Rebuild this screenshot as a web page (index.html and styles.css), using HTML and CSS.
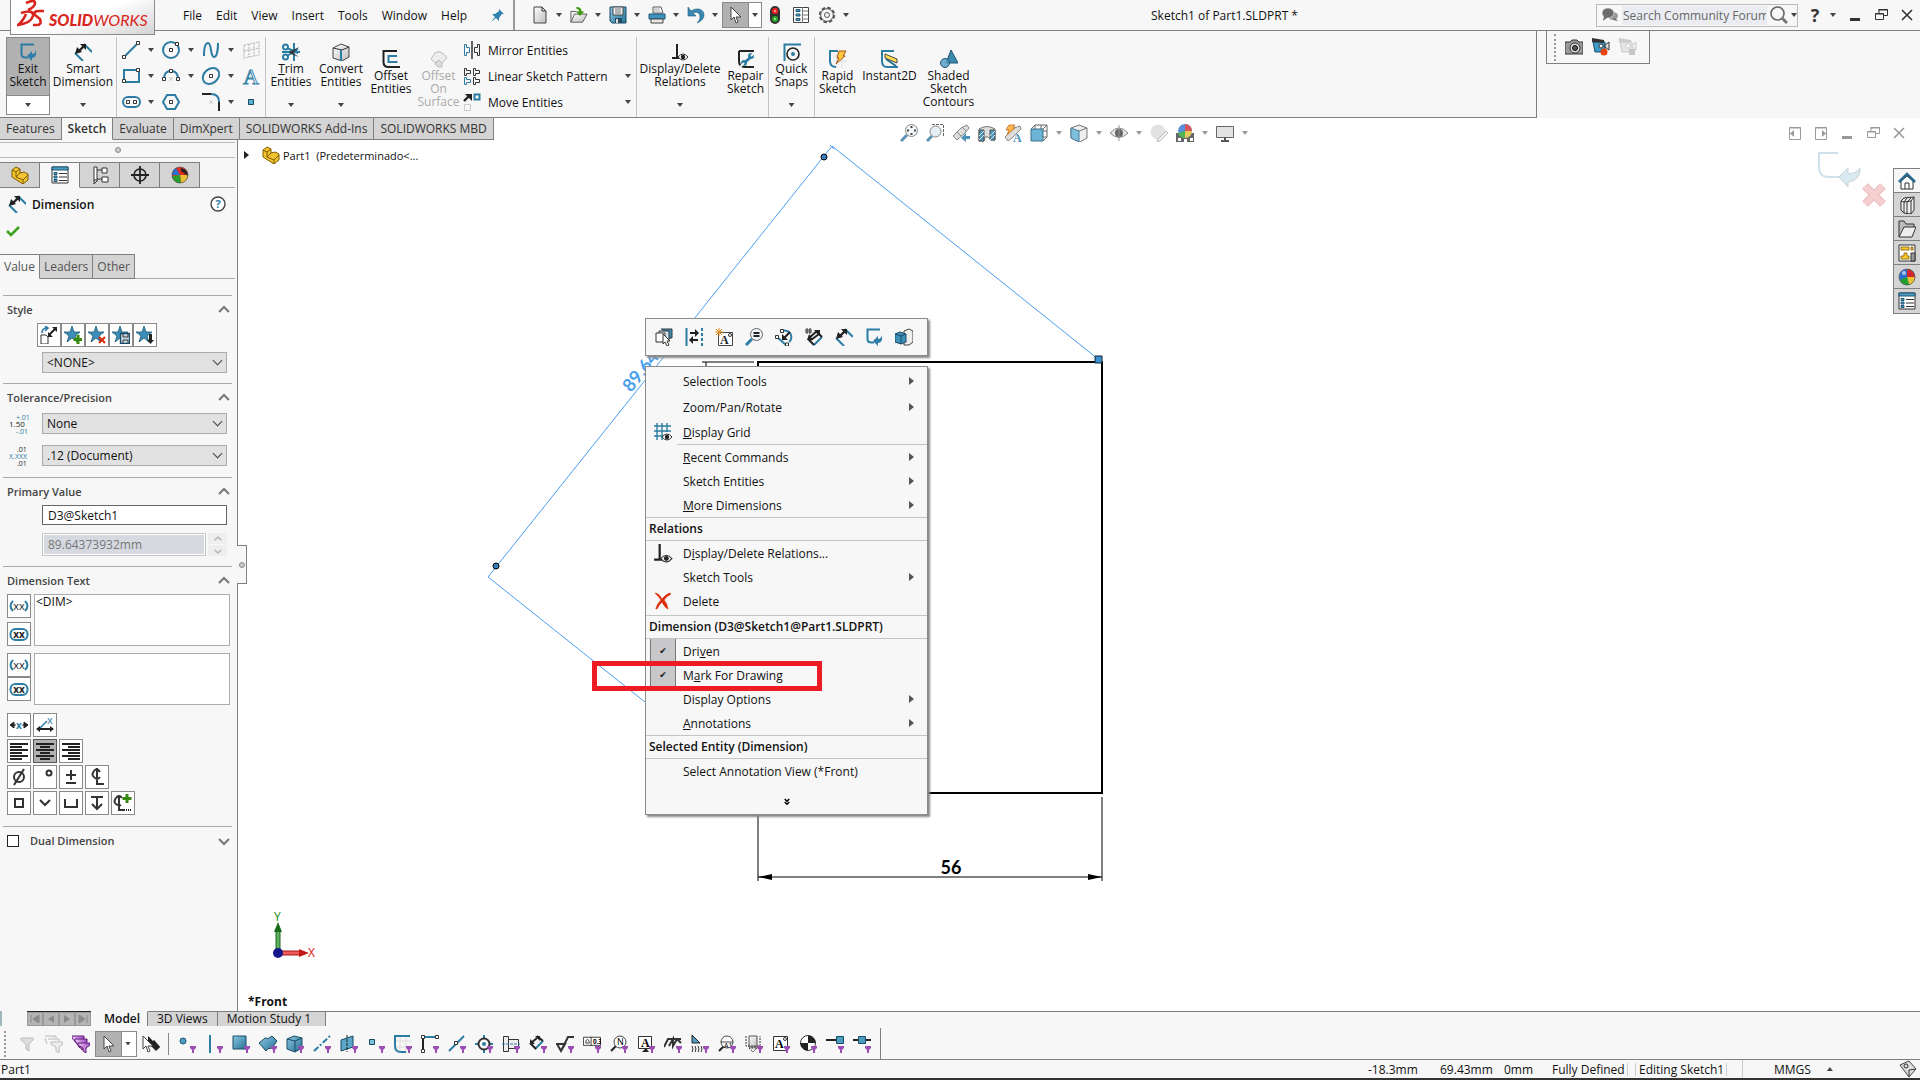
FILE: index.html
```html
<!DOCTYPE html>
<html lang="en">
<head>
    <meta charset="UTF-8">
    <meta name="viewport" content="width=device-width, initial-scale=1.0">
    <title>Sketch1 of Part1.SLDPRT</title>
    <link rel="stylesheet" href="styles.css">
</head>
<body>
    <!-- gradients stay rendered, symbols do not need to -->
    <svg class="gradients" aria-hidden="true">
        <defs>
            <linearGradient id="gb" x1="0" y1="0" x2="1" y2="1"><stop offset="0" stop-color="#8cc8e2"/><stop offset="1" stop-color="#256f94"/></linearGradient>
            <linearGradient id="gg" x1="0" y1="0" x2="1" y2="1"><stop offset="0" stop-color="#ffffff"/><stop offset="1" stop-color="#bdbdbd"/></linearGradient>
            <linearGradient id="gp" x1="0" y1="0" x2="1" y2="0"><stop offset="0" stop-color="#f0c8f8"/><stop offset="1" stop-color="#a04cc0"/></linearGradient>
        </defs>
    </svg>
    <!-- icon sprite -->
    <svg class="sprite" aria-hidden="true">
        <symbol id="pin" viewBox="0 0 18 18"><path d="M10 3l5 5-2 0-3 4 0 3-3-3-5 4 4-5-3-3 3 0 4-3z" fill="#2f82ad"/></symbol>
        <symbol id="new" viewBox="0 0 18 18"><path d="M3 1h8l4 4v12H3z" fill="url(#gg)" stroke="#444"/><path d="M11 1v4h4" class="sk"/></symbol>
        <symbol id="open" viewBox="0 0 20 18"><path d="M1 17V5h6l2 2h4v3" fill="#eee" stroke="#555"/><path d="M1 17l4-9h14l-5 9z" fill="url(#gg)" stroke="#555"/><path d="M7 0c4 0 6 2 6 5h3l-5 5-4-5h3c0-2-1-3-3-3z" fill="#3c9a10"/></symbol>
        <symbol id="save" viewBox="0 0 18 18"><path d="M1 1h16v16H3l-2-2z" fill="url(#gb)" stroke="#184b66"/><path d="M4 1h10v8H4z" fill="#f4f4f4" stroke="#444"/><path d="M6 3h6M6 5h6M6 7h6" stroke="#777"/><path d="M6 12h7v5H6z" fill="#244c60"/><path d="M7 13h2v4H7z" fill="#ddd"/></symbol>
        <symbol id="print" viewBox="0 0 18 18"><path d="M5 7V1h8l2 6z" fill="#fff" stroke="#555"/><path d="M6 3h6M6 5h6" stroke="#aaa"/><path d="M1 8h16v5H1z" fill="#3d93bd" stroke="#1d5675"/><path d="M3 13h12v4H3z" fill="#e8e8e8" stroke="#444"/></symbol>
        <symbol id="undo" viewBox="0 0 18 18"><path d="M1 1v9h8L6 7c4-2 7 0 7 4 0 2-1 4-3 6 5-2 7-5 7-8C17 3 10 1 4 5z" fill="#3a87b0" stroke="#1f5d80" stroke-width=".6"/></symbol>
        <symbol id="arrow" viewBox="0 0 18 18"><path d="M4 1v13l3-3 2 6 2-1-2-5h5z" fill="#fff" stroke="#444"/></symbol>
        <symbol id="arrows" viewBox="0 0 18 18"><path d="M6 1v8l8 6 3-2-7-8z" fill="#222"/><path d="M8 7l7 8M11 6l6 7" stroke="#222" stroke-width="3"/><path d="M1 1v13l3-3 2 6 2-1-2-5h5z" fill="#fff" stroke="#444"/></symbol>
        <symbol id="light" viewBox="0 0 18 18"><rect x="4" y="0" width="10" height="18" rx="5" fill="#333"/><circle cx="9" cy="5" r="3" fill="#e22"/><circle cx="9" cy="13" r="3" fill="#2a2"/><path d="M8 5h2M8 13h2" stroke="#fff"/></symbol>
        <symbol id="opts" viewBox="0 0 18 18"><path d="M1.500 1.500h15v15h-15z" fill="#fff" stroke="#444"/><path d="M10.500 1v16M11 5h5M11 9h5M11 13h5" stroke="#777"/><path d="M4 3.500h4v2H4zM4 8h4v2H4zM4 12.500h4v2H4z" fill="#5aa7ca" stroke="#1d5675"/></symbol>
        <symbol id="gear" viewBox="0 0 18 18"><circle cx="9" cy="9" r="7" fill="none" stroke="#555" stroke-width="2.400" stroke-dasharray="3.500 2"/><circle cx="9" cy="9" r="6.300" fill="#f7f7f7" stroke="#555"/><circle cx="9" cy="9" r="2.500" fill="none" stroke="#555"/></symbol>
        <symbol id="chat" viewBox="0 0 18 18"><ellipse cx="12" cy="10" rx="5" ry="4" fill="#999"/><ellipse cx="7" cy="7" rx="6" ry="5" fill="#6b6b6b" stroke="#f7f7f7" stroke-width=".6"/><path d="M3 10l-1 5 5-4zM14 12l3 3-5-1z" fill="#6b6b6b"/></symbol>
        <symbol id="find" viewBox="0 0 18 18"><circle cx="7.500" cy="7.500" r="6.500" fill="none" stroke="#666" stroke-width="1.600"/><path d="M12 12l5 5" stroke="#777" stroke-width="3"/></symbol>
        <symbol id="min" viewBox="0 0 18 18"><path d="M4 12h10v3H4z" fill="currentColor"/></symbol>
        <symbol id="restore" viewBox="0 0 18 18"><path d="M7 7V3.500h8.500v6H12M6 4h10" fill="none" stroke="currentColor"/><path d="M3.500 7.500h8v6h-8zM3 8h9" fill="none" stroke="currentColor"/></symbol>
        <symbol id="close" viewBox="0 0 18 18"><path d="M4 4l10 10M14 4L4 14" stroke="currentColor" stroke-width="1.600"/></symbol>
        <symbol id="dockl" viewBox="0 0 18 18"><path d="M3.500 3.500h11v12h-11zM3 4h12" fill="none" stroke="currentColor"/><path d="M8 6v7L4 9.500z" fill="currentColor"/></symbol>
        <symbol id="dockr" viewBox="0 0 18 18"><path d="M3.500 3.500h11v12h-11zM3 4h12" fill="none" stroke="currentColor"/><path d="M10 6v7l4-3.500z" fill="currentColor"/></symbol>

        <symbol id="exit" viewBox="0 0 18 18"><path d="M15 1.500H2.500V11q0 3.500 4 3.500H9" class="sb"/><path d="M8 13l5-5v3q3 0 4-4 1 8-4 8v3z" fill="#2f7ea8"/></symbol>
        <symbol id="dim" viewBox="0 0 18 18"><path d="M1 10l8 8M10 1l8 8" class="sb"/><path d="M4 9l6-6" stroke="#222" stroke-width="2.400"/><path d="M1 11l2-7 5 5zM6 1h6v6z" fill="#222"/></symbol>
        <symbol id="line" viewBox="0 0 20 20"><path d="M3 17L17 3" class="sb"/><path d="M1.500 15.500h3v3h-3zM15.500 1.500h3v3h-3z" class="hd"/></symbol>
        <symbol id="circle" viewBox="0 0 20 20"><circle cx="10" cy="10" r="8" class="sb"/><path d="M8.500 8.500h3v3h-3zM14.500 2.500h3v3h-3z" class="hd"/></symbol>
        <symbol id="spline" viewBox="0 0 20 20"><path d="M3 16C3 10 4 3 7 3c4 0 2 14 6 14 3 0 4-8 4-14" class="sb"/></symbol>
        <symbol id="plane" viewBox="0 0 20 20"><path d="M3 5l15-3v13L3 18zM3 11l15-3M8 4v13M13 3v13" fill="none" stroke="#c4c4c4" stroke-width="1.400" stroke-dasharray="2 1"/></symbol>
        <symbol id="rect" viewBox="0 0 20 20"><path d="M3 4h15v12H3z" class="sb"/><path d="M1.500 13.500h3v3h-3zM15.500 2.500h3v3h-3z" class="hd"/></symbol>
        <symbol id="arc" viewBox="0 0 20 20"><path d="M3 13Q3 5 10 5t7 8" class="sb"/><path d="M8 11l4 4M12 11l-4 4" stroke="#ccc"/><path d="M1.500 11.500h3v3h-3zM15.500 11.500h3v3h-3zM8.500 3.500h3v3h-3z" class="hd"/></symbol>
        <symbol id="ellipse" viewBox="0 0 20 20"><ellipse cx="10" cy="10" rx="9" ry="7" transform="rotate(-40 10 10)" class="sb"/><path d="M8.500 8.500h3v3h-3z" class="hd"/></symbol>
        <symbol id="stext" viewBox="0 0 20 20"><text x="2" y="18" font-size="22" font-family="Liberation Serif" fill="#fff" stroke="#3a85ab">A</text></symbol>
        <symbol id="slot" viewBox="0 0 20 20"><rect x="2" y="5" width="17" height="10" rx="5" class="sb"/><path d="M5.500 8.500h3v3h-3zM12.500 8.500h3v3h-3z" class="hd"/></symbol>
        <symbol id="poly" viewBox="0 0 20 20"><path d="M6 3h8l4 7-4 7H6l-4-7z" class="sb"/><path d="M8.500 8.500h3v3h-3z" class="hd"/></symbol>
        <symbol id="fillet" viewBox="0 0 20 20"><path d="M1 2h9" stroke="#222" stroke-width="2"/><path d="M10 2q8 0 8 8" class="sb"/><path d="M18 10v9" stroke="#222" stroke-width="2"/><path d="M8 8l4 4M12 8l-4 4" stroke="#ccc"/></symbol>
        <symbol id="point" viewBox="0 0 20 20"><path d="M7.500 7.500h5v5h-5z" fill="#5fb0d4" stroke="#184b66"/></symbol>
        <symbol id="trim" viewBox="0 0 18 18"><path d="M5 5l11 5M5 13L16 6M12 0v18M0 9h18" class="sb"/><path d="M7 9l10-5-6 6 6 4-8-3z" fill="#333"/><circle cx="3.500" cy="4" r="2.500" class="sb"/><circle cx="3.500" cy="14" r="2.500" class="sb"/></symbol>
        <symbol id="convert" viewBox="0 0 18 18"><path d="M1 5l8-4 8 3v10l-7 4-9-3z" fill="url(#gg)" stroke="#444"/><path d="M1 5l9 2 7-3" class="sk"/><path d="M9 7v11" class="sb"/></symbol>
        <symbol id="offset" viewBox="0 0 18 18"><path d="M15 1H1.500v11q0 5 5 5H18" fill="none" stroke="#222" stroke-width="2"/><path d="M15 6H6.500v6h9" class="sb"/></symbol>
        <symbol id="offsurf" viewBox="0 0 18 18"><path d="M1 9l4-6q6-4 12 5l-5 5-3-3-4 3z" fill="#eee" stroke="#bbb"/><path d="M5 14l4-4 3 3v4H8z" fill="#ddd" stroke="#bbb"/></symbol>
        <symbol id="mirror" viewBox="0 0 18 18"><path d="M9 0v18" stroke="#222" stroke-width="1.400"/><path d="M1.500 3.500h2v3h3v5h-3v3h-2z" fill="none" stroke="#2c7da3"/><path d="M16.500 3.500h-2v3h-3v5h3v3h2z" class="sk"/></symbol>
        <symbol id="pattern" viewBox="0 0 18 18"><path d="M1.500 1.500h2v2h4v3h-4v2h-2zM10.500 1.500h2v2h4v3h-4v2h-2zM10.500 10.500h2v2h4v3h-4v2h-2z" class="sk"/><path d="M1.500 10.500h2v2h4v3h-4v2h-2z" fill="none" stroke="#2c7da3"/></symbol>
        <symbol id="move" viewBox="0 0 18 18"><path d="M11.500 1.500h5v5h-5z" class="sb"/><path d="M1 8l5-5" stroke="#222" stroke-width="2.400"/><path d="M2 1h7v7z" fill="#222"/><path d="M1.500 11.500h6v6h-6z" fill="none" stroke="#bbb" stroke-dasharray="2 1"/></symbol>
        <symbol id="rel" viewBox="0 0 18 18"><path d="M6 1v13M1 15h8" stroke="#222" stroke-width="2"/><path d="M7 14q5-6 10 0-5 6-10 0z" fill="#fff" stroke="#333"/><circle cx="12" cy="14" r="2.200" fill="#222"/></symbol>
        <symbol id="repair" viewBox="0 0 18 18"><path d="M17 1H2M2 1v10q0 6 6 6h9" fill="none" stroke="#222" stroke-width="2"/><path d="M6 14l9-8" stroke="#2c7da3" stroke-width="3"/><circle cx="14" cy="6" r="3" fill="#2c7da3"/><circle cx="7" cy="13" r="3" fill="#2c7da3"/><path d="M14 6l4-4M7 13l-4 4" stroke="#f7f7f7" stroke-width="2"/></symbol>
        <symbol id="snaps" viewBox="0 0 18 18"><path d="M1.500 18V1.500H18" class="sb"/><circle cx="10" cy="11" r="6" fill="none" stroke="#222" stroke-width="1.600"/><circle cx="10" cy="11" r="2" fill="#2c7da3"/></symbol>
        <symbol id="rapid" viewBox="0 0 18 18"><path d="M4 6h14M4 11h14M8 3v15M13 3v15" stroke="#ddd"/><path d="M9 1H1v10q0 6 6 6" class="sb"/><path d="M10 1h7l-3 5h2l-9 8 3-6H8z" fill="#ffc83d" stroke="#a4541a"/></symbol>
        <symbol id="instant" viewBox="0 0 18 18"><path d="M13 1H1v10q0 6 5 6h11" class="sb"/><path d="M4 4l12 5v4L4 8z" fill="#ffdb4d" stroke="#444"/><path d="M5 9l10 7" stroke="#256f94" stroke-width="2"/></symbol>
        <symbol id="shaded" viewBox="0 0 18 18"><path d="M11 0l7 13H6z" fill="#3d89ae" stroke="#1d5675"/><circle cx="5" cy="13" r="4.500" fill="#4f9cc1" fill-opacity=".8" stroke="#1d5675"/></symbol>
        <symbol id="camera" viewBox="0 0 18 18"><path d="M0 4h5l2-2h5l2 2h4v12H0z" fill="#999" stroke="#333"/><circle cx="10" cy="10" r="5" fill="#ddd" stroke="#333"/><circle cx="10" cy="10" r="2.500" fill="#555" stroke="#111"/></symbol>
        <symbol id="record" viewBox="0 0 18 18"><path d="M1 4h12v10H3z" fill="#3c9bc6" stroke="#1a4d66"/><path d="M0 0v4l12 1V2z" fill="#333"/><path d="M13 7l4-3v8l-4-3z" fill="#ddd" stroke="#333"/><circle cx="9" cy="8" r="2" fill="#fff" stroke="#333"/><circle cx="12" cy="14" r="3.500" fill="#e8430c"/></symbol>
        <symbol id="stoprec" viewBox="0 0 18 18"><path d="M1 4h12v10H3z" fill="#e4e4e4" stroke="#ccc"/><path d="M0 0v4l12 1V2z" fill="#ccc"/><path d="M13 7l4-3v8l-4-3z" fill="#eee" stroke="#ccc"/><circle cx="9" cy="8" r="2" fill="#fff" stroke="#ccc"/><path d="M10 11h6v6h-6z" fill="#c6c6c6"/></symbol>

        <symbol id="zfit" viewBox="0 0 18 18"><path d="M1 17l6-6" stroke="#5c95b3" stroke-width="3"/><circle cx="11.500" cy="6.500" r="6" fill="#f2f6f8" stroke="#888"/><path d="M11.500 2v2M11.500 9v2M7 6.500h2M14 6.500h2" stroke="#444" stroke-width="2"/></symbol>
        <symbol id="zarea" viewBox="0 0 18 18"><path d="M6 .5h11.500v12" fill="none" stroke="#666" stroke-dasharray="3 1"/><path d="M1 17l5-5" stroke="#5c95b3" stroke-width="3"/><circle cx="9.500" cy="7.500" r="5.500" fill="#e3eff5" stroke="#888"/></symbol>
        <symbol id="zprev" viewBox="0 0 18 18"><path d="M1 12l8-8 6-3 2 3-4 5-8 7z" fill="#ddd" stroke="#888"/><path d="M10 3l4 4M5 8l4 4" stroke="#888"/><path d="M18 12h-4V9l-5 5 5 4v-3h4z" fill="#4a92b8"/></symbol>
        <symbol id="section" viewBox="0 0 18 18"><path d="M1 5q8-5 16 0v11h-4l-3-3H7l-1 4H1z" fill="#ddd" stroke="#777"/><path d="M1 6h5v11H1zM12 6h5v10h-5z" fill="#4a92b8" stroke="#555"/><path d="M1 12l5-5M1 16l5-5M12 12l5-5M12 16l5-5" stroke="#d5e8f1"/></symbol>
        <symbol id="dynview" viewBox="0 0 18 18"><path d="M1 13l9-9 6-2 1 3-9 9-4 3z" fill="#ddd" stroke="#888"/><path d="M5 1h6L9 4h2l-8 7 2-5H2z" fill="#ffb84d" stroke="#b05b1a" stroke-width=".7"/><text x="9" y="18" font-size="12" font-family="Liberation Serif" font-weight="bold" fill="#4a92b8">A</text></symbol>
        <symbol id="orient" viewBox="0 0 18 18"><path d="M5 1h12v12H5zM5 1l-4 4M17 1l-4 4M17 13l-4 4M5 7h12M11 1v12" fill="none" stroke="#666"/><path d="M1 5h12v12H1z" fill="#6db3d3" stroke="#3b6f8b"/></symbol>
        <symbol id="style" viewBox="0 0 18 18"><path d="M1 4l8-3 8 3v10l-7 4-9-4z" fill="#eee" stroke="#777"/><path d="M1 4l8 3v11l-8-4z" fill="#7fbfdb" stroke="#4d7f98"/><path d="M9 7l8-3" stroke="#777"/></symbol>
        <symbol id="eye" viewBox="0 0 18 18"><path d="M0 9q9-10 18 0-9 9-18 0z" fill="#e6e6e6" stroke="#888"/><circle cx="9" cy="9" r="4" fill="#666"/><path d="M9 1v16" stroke="#999"/></symbol>
        <symbol id="editapp" viewBox="0 0 18 18"><circle cx="8" cy="8" r="7.500" fill="#e2e2e2"/><path d="M8 15l8-8 2 2-8 8-3 1z" fill="#eee" stroke="#bbb"/></symbol>
        <symbol id="ball" viewBox="0 0 18 18"><circle cx="9" cy="9" r="8" fill="#2b6fd1"/><path d="M9 9V1a8 8 0 0 1 8 8z" fill="#d3272b"/><path d="M9 9h8a8 8 0 0 1-6 8z" fill="#e9c136"/><path d="M9 9l2 8a8 8 0 0 1-9-5z" fill="#26a02c"/><circle cx="9" cy="9" r="8" fill="none" stroke="#555" stroke-width=".7"/><circle cx="6" cy="5" r="2" fill="#fff" fill-opacity=".6"/></symbol>
        <symbol id="ball2" viewBox="0 0 18 18"><circle cx="9" cy="9" r="8" fill="#e02b20"/><path d="M9 9L1 9a8 8 0 0 1 4-7z" fill="#2b6fd1"/><path d="M9 9h8a8 8 0 0 1-7 8z" fill="#e9c136"/><path d="M9 9l1 8a8 8 0 0 1-9-7z" fill="#26a02c"/><path d="M10 2q7 2 7 8l-7-5z" fill="#222"/><circle cx="9" cy="9" r="8" fill="none" stroke="#555" stroke-width=".7"/></symbol>
        <symbol id="scene" viewBox="0 0 18 18"><path d="M0 9h18v9H0z" fill="#666"/><path d="M2 14h3v3H2zM8 15h3v3H8zM14 14h3v3h-3z" fill="#fff"/><circle cx="9" cy="7" r="7" fill="#5b8fdc"/><path d="M9 7V0a7 7 0 0 1 7 7z" fill="#d8555a"/><path d="M9 7h7a7 7 0 0 1-7 7z" fill="#e8c95a"/><path d="M9 7v7a7 7 0 0 1-7-5z" fill="#4db352"/></symbol>
        <symbol id="monitor" viewBox="0 0 18 18"><path d="M.5 2.500h17v11H.5z" fill="#e2e2e2" stroke="#666"/><path d="M9 13v4M5 17h8" stroke="#555" stroke-width="2"/></symbol>

        <symbol id="home" viewBox="0 0 18 18"><path d="M3 9v8h12V9L9 4z" fill="#fff" stroke="#333"/><path d="M7 17v-6h4v6" class="sk"/><path d="M1 10l8-8 8 8" fill="none" stroke="#26678a" stroke-width="2.600"/></symbol>
        <symbol id="books" viewBox="0 0 18 18"><path d="M3 5l3-3 10-1v13l-3 4-7-1-3-3z" fill="#eee" stroke="#333"/><path d="M6 6v11M9 6v11M13 5v13M3 5l3 1 7-1 3-4M6 6l3-4M9 6l4-4" class="sk"/></symbol>
        <symbol id="folder" viewBox="0 0 18 18"><path d="M1 17V1h5l2 3h8v3" fill="#bbb" stroke="#333"/><path d="M1 17L6 7h12l-4 10z" fill="#eee" stroke="#333"/></symbol>
        <symbol id="palette" viewBox="0 0 18 18"><path d="M1 1h16v16H1z" fill="#fff" stroke="#333"/><path d="M3 3h8v3H3zM13 3h2v3h-2zM6 9h3v3h2v3H3v-3h3z" fill="#ffc92e" stroke="#7a5a00" stroke-width=".8"/><path d="M13 9h4v8h-4z" fill="#999" stroke="#333"/></symbol>
        <symbol id="props" viewBox="0 0 18 18"><path d="M1 1h16v16H1z" fill="#fff" stroke="#333"/><path d="M1 1h16v3H1z" fill="#4e9cc2" stroke="#1d5675"/><path d="M3 6.500h3v2H3zM3 10h3v2H3zM3 13.500h3v2H3z" fill="#5aa7ca" stroke="#1d5675"/><path d="M8 7.500h8M8 11h8M8 14.500h8" stroke="#333"/></symbol>
        <symbol id="part" viewBox="0 0 18 18"><path d="M1 4l4-3 4 2v4l4-1 4 2v6l-5 4L1 11z" fill="#f4c430" stroke="#7d5c00"/><path d="M1 4l4 2 4-3M5 6v5l7 3 5-5M5 11l4-4M12 14v4" fill="none" stroke="#7d5c00"/></symbol>
        <symbol id="tree" viewBox="0 0 18 18"><path d="M3 1h3v13H3zM6 4h5M6 13h5M11 2h5v5h-5zM11 11h6v5h-6z" fill="#fff" stroke="#333"/><path d="M3 14v4l4-4" class="sk"/></symbol>
        <symbol id="cross" viewBox="0 0 18 18"><circle cx="9" cy="9" r="6" fill="none" stroke="#222" stroke-width="1.600"/><path d="M9 0v18M0 9h18" stroke="#222" stroke-width="1.800"/></symbol>
        <symbol id="help" viewBox="0 0 18 18"><circle cx="9" cy="9" r="7" fill="#fff" stroke="#444" stroke-width="1.400"/><text x="9" y="13" text-anchor="middle" font-size="11" font-weight="bold" fill="#2c7da3">?</text></symbol>
        <symbol id="ok" viewBox="0 0 18 18"><path d="M3 9l4 4 8-8" fill="none" stroke="#3fa21d" stroke-width="2.600"/></symbol>
        <symbol id="up" viewBox="0 0 12 12"><path d="M1 8l5-5 5 5" fill="none" stroke="#777" stroke-width="2"/></symbol>
        <symbol id="down" viewBox="0 0 12 12"><path d="M1 4l5 5 5-5" fill="none" stroke="#777" stroke-width="2"/></symbol>
        <symbol id="defstyle" viewBox="0 0 18 18"><path d="M1 9h5l2 2v7H1z" fill="#fff" stroke="#333"/><path d="M2 7q0-5 5-5M5 0l3 2-3 3" fill="none" stroke="#2c7da3" stroke-width="1.600"/><path d="M9 9l6-6" stroke="#222" stroke-width="2"/><path d="M8 6l5 5H8zM12 1h5v5z" fill="#222"/></symbol>
        <symbol id="star" viewBox="0 0 18 18"><path d="M8 0l2 6h6l-5 4 2 6-5-4-5 4 2-6-5-4h6z" fill="#3e8fb8" stroke="#1d5675" stroke-width=".8"/></symbol>
        <symbol id="s-add" viewBox="0 0 18 18"><path d="M14 9v9M9.500 13.500h9" stroke="#368a10" stroke-width="3"/></symbol>
        <symbol id="s-del" viewBox="0 0 18 18"><path d="M11 11l6 6M17 11l-6 6" stroke="#d8290b" stroke-width="2"/></symbol>
        <symbol id="s-save" viewBox="0 0 18 18"><path d="M8.500 7.500h9v10h-9z" fill="#c9dde7" stroke="#184b66" stroke-width="1.400"/><path d="M11 8v3h5V8M11 17v-3h5v3" class="sk"/></symbol>
        <symbol id="s-load" viewBox="0 0 18 18"><path d="M13 8h3v6h2l-3.500 4-3.500-4h2z" fill="#222"/></symbol>
        <symbol id="tol" viewBox="0 0 20 20"><text x="0" y="13" font-size="8" fill="#222">1.50</text><text x="7" y="6" font-size="7" fill="#2c7da3">+.01</text><text x="7" y="20" font-size="7" fill="#2c7da3">-.01</text></symbol>
        <symbol id="prec" viewBox="0 0 20 20"><text x="0" y="13" font-size="7" fill="#2c7da3">X.XXX</text><text x="8" y="6" font-size="7" fill="#222">.01</text><text x="8" y="20" font-size="7" fill="#222">.01</text></symbol>
        <symbol id="paren" viewBox="0 0 20 20"><path d="M4 5Q-1 10 4 15M16 5q5 5 0 10" class="sb"/><text x="10" y="14" text-anchor="middle" font-size="11" fill="#222">xx</text></symbol>
        <symbol id="inspect" viewBox="0 0 20 20"><rect x="1.500" y="5" width="17" height="11" rx="5" class="sb"/><text x="10" y="14" text-anchor="middle" font-size="10" font-weight="bold" fill="#222">xx</text></symbol>
        <symbol id="ctext" viewBox="0 0 20 20"><path d="M5 7v6l-4-3zM15 7v6l4-3zM4 10h3M13 10h3" fill="#222" stroke="#222"/><text x="10" y="14" text-anchor="middle" font-size="10" font-weight="bold" fill="#2c7da3">x</text></symbol>
        <symbol id="otext" viewBox="0 0 20 20"><path d="M4 14l8-8" stroke="#2c7da3" stroke-width="1.600"/><path d="M3 14h14" stroke="#222" stroke-width="2"/><path d="M5 11v6l-4-3zM15 11v6l4-3z" fill="#222"/><text x="12" y="9" font-size="11" fill="#2c7da3">x</text></symbol>
        <symbol id="al" viewBox="0 0 20 20"><path d="M1 3h18M1 6h12M1 9h18M1 12h12M1 15h18M1 18h12" class="bar"/></symbol>
        <symbol id="ac" viewBox="0 0 20 20"><path d="M1 3h18M5 6h10M1 9h18M5 12h10M1 15h18M5 18h10" class="bar"/></symbol>
        <symbol id="ar" viewBox="0 0 20 20"><path d="M1 3h18M7 6h12M1 9h18M7 12h12M1 15h18M7 18h12" class="bar"/></symbol>
        <symbol id="dia" viewBox="0 0 20 20"><circle cx="10" cy="10" r="5" class="sd"/><path d="M15 2L5 18" class="sd"/></symbol>
        <symbol id="deg" viewBox="0 0 20 20"><circle cx="14" cy="6" r="2.500" class="sd"/></symbol>
        <symbol id="pm" viewBox="0 0 20 20"><path d="M10 3v10M5 8h10M5 16h10" class="sd"/></symbol>
        <symbol id="cl" viewBox="0 0 20 20"><path d="M13 5Q10 0 7 4t0 6q3 4 6 0M10 1v16h7" class="sd"/></symbol>
        <symbol id="sq" viewBox="0 0 20 20"><path d="M6 6h8v8H6z" class="sd"/></symbol>
        <symbol id="vee" viewBox="0 0 20 20"><path d="M5 7l5 5 5-5" class="sd"/></symbol>
        <symbol id="cbore" viewBox="0 0 20 20"><path d="M4 6v8h12V6" class="sd"/></symbol>
        <symbol id="depth" viewBox="0 0 20 20"><path d="M4 4h12M10 4v12M5 11l5 5 5-5" class="sd"/></symbol>
        <symbol id="more" viewBox="0 0 20 20"><path d="M9 5Q6 1 3 5t0 6q3 2 5 1M6 3v14h6" class="sd"/><path d="M14 1v9M9.500 5.500h9" stroke="#368a10" stroke-width="3"/><path d="M13 17h6" stroke="#222" stroke-width="2" stroke-dasharray="1 1"/></symbol>

        <symbol id="selother" viewBox="0 0 18 18"><path d="M6 1h11v9h-3" fill="#3c8fb8" stroke="#333"/><path d="M4 3h10v9H4z" fill="#cfe4ef" stroke="#333"/><path d="M1 5h9v9H1z" fill="#fff" stroke="#333"/><path d="M8 6v10l2-2 2 4 2-1-2-4h3z" fill="#fff" stroke="#333"/></symbol>
        <symbol id="constr" viewBox="0 0 18 18"><path d="M1.500 0v18" class="sb"/><path d="M17 0v18" fill="none" stroke="#2c7da3" stroke-width="2" stroke-dasharray="3 2"/><path d="M5 5h5M7 12h6" stroke="#222" stroke-width="2"/><path d="M10 1l4 4-4 4zM8 8v8l-4-4z" fill="#222"/></symbol>
        <symbol id="anote" viewBox="0 0 18 18"><path d="M3.500 4.500h14v13h-14z" fill="#fff" stroke="#444"/><text x="5" y="16" font-size="12" font-family="Liberation Serif" font-weight="bold" fill="#222">A</text><circle cx="15" cy="7" r="1.500" class="sk"/><path d="M4 0v8M0 4h8M1 1l6 6M7 1L1 7" stroke="#e08a1e"/></symbol>
        <symbol id="zsel" viewBox="0 0 18 18"><path d="M1 17l6-6" stroke="#2c7da3" stroke-width="3"/><circle cx="11.500" cy="6.500" r="6" fill="#eef5f9" stroke="#666"/><path d="M8.500 5h6M8.500 8h6" stroke="#222" stroke-width="2"/></symbol>
        <symbol id="autodim" viewBox="0 0 18 18"><path d="M6 4a6 6 0 1 1 8 10M2 9l9 8" class="sb"/><path d="M15 4L9 10" stroke="#222" stroke-width="2"/><path d="M7 12V6l6 6z" fill="#222"/><path d="M.5 7.500h3v3h-3zM5.500 1.500h3v3h-3zM10.500 15h3v3h-3z" class="hd"/></symbol>
        <symbol id="orddim" viewBox="0 0 18 18"><path d="M9 17l8-8" class="sb"/><path d="M3 11l6 6M11 3l6 6M4 10l8-7M6 12l8-6" stroke="#222" stroke-width="2"/><path d="M2 12l2-6 4 6zM9 2h6v6z" fill="#222"/><path d="M2 0v6M5 0v6M0 2h7M0 4h7" class="sk"/></symbol>
        <symbol id="solid" viewBox="0 0 18 18"><path d="M9 3l5-2 4 2v11l-4 3h-5z" fill="#eee" stroke="#444"/><path d="M0 6l5-2 6 2v8l-5 2-6-2z" fill="#3c8fb8" stroke="#1d4d66"/><path d="M0 6l6 2 5-2M6 8v8" fill="none" stroke="#1d4d66"/></symbol>
        <symbol id="grid" viewBox="0 0 20 20"><path d="M1 4h17M1 9h17M1 14h10M4 1v17M9 1v17M14 1v9" fill="none" stroke="#2c7da3" stroke-width="1.400"/><path d="M9 15q5-6 10 0-5 6-10 0z" fill="#fff" stroke="#333"/><circle cx="14" cy="15" r="2.200" fill="#222"/></symbol>
        <symbol id="del" viewBox="0 0 20 20"><path d="M2 2q4 0 7 6 4-5 8-6l1 1q-4 2-7 6 3 3 4 9-3-1-6-7-3 3-5 7-2 0-1-1 1-4 5-8-2-3-6-7z" fill="#dc2d0c" stroke="#dc2d0c" stroke-width=".6"/></symbol>
        <symbol id="first" viewBox="0 0 14 12"><path d="M3 2v8M11 2v8L5 6z" fill="#8a8a8a" stroke="#8a8a8a"/></symbol>
        <symbol id="prev" viewBox="0 0 14 12"><path d="M10 2v8L4 6z" fill="#8a8a8a"/></symbol>
        <symbol id="next" viewBox="0 0 14 12"><path d="M4 2v8l6-4z" fill="#8a8a8a"/></symbol>
        <symbol id="last" viewBox="0 0 14 12"><path d="M11 2v8M3 2v8l6-4z" fill="#8a8a8a" stroke="#8a8a8a"/></symbol>

        <symbol id="flt" viewBox="0 0 18 18"><path d="M12 11h6v2l-2 2v3h-2v-3l-2-2z" fill="#9b4fb5"/></symbol>
        <symbol id="fun" viewBox="0 0 18 18"><path d="M3 3h12v2l-4 4v7l-3-2V9L3 5z" fill="#ddd" stroke="#bbb"/></symbol>
        <symbol id="funs" viewBox="0 0 18 18"><path d="M0 1h11v2M3 4h11v2M2 9l-2-6" fill="#eee" stroke="#bbb"/><path d="M6 7h12v2l-4 3v6l-3-2v-4L6 9z" fill="#eee" stroke="#bbb"/></symbol>
        <symbol id="funp" viewBox="0 0 18 18"><path d="M0 1h12v3L8 8v5L5 9 0 3z" fill="url(#gp)" stroke="#5d1d78"/><path d="M3 4h12v3l-5 8-3-4-4-5z" fill="url(#gp)" stroke="#5d1d78"/><path d="M6 8h12v2l-4 3v5l-3-2v-3l-5-3z" fill="url(#gp)" stroke="#5d1d78"/></symbol>
        <symbol id="f1" viewBox="0 0 18 18"><circle cx="5" cy="6" r="3" fill="#4e9cc2" stroke="#1d5675"/></symbol>
        <symbol id="f2" viewBox="0 0 18 18"><path d="M5 0v18" class="sb"/></symbol>
        <symbol id="f3" viewBox="0 0 18 18"><path d="M1 1h13v13H1z" fill="url(#gb)" stroke="#184b66"/></symbol>
        <symbol id="f4" viewBox="0 0 18 18"><path d="M0 8l6-5q3 2 7-2l5 5-5 7q-5 0-6 3z" fill="url(#gb)" stroke="#184b66"/></symbol>
        <symbol id="f5" viewBox="0 0 18 18"><path d="M1 4l7-3 8 2v10l-7 4-8-3z" fill="url(#gb)" stroke="#184b66"/><path d="M1 4l8 2 7-3M9 6v11" fill="none" stroke="#184b66"/></symbol>
        <symbol id="f6" viewBox="0 0 18 18"><path d="M1 16L17 1" fill="none" stroke="#2c7da3" stroke-width="2" stroke-dasharray="6 2 2 2"/></symbol>
        <symbol id="f7" viewBox="0 0 18 18"><path d="M1 5l12-4v11L1 16z" fill="#5ba6c9" stroke="#184b66"/><path d="M7 0v17" stroke="#222" stroke-dasharray="3 1"/></symbol>
        <symbol id="f8" viewBox="0 0 18 18"><path d="M2.500 4.500h5v5h-5z" fill="#7cc0de" stroke="#184b66"/></symbol>
        <symbol id="f9" viewBox="0 0 18 18"><path d="M6 0v18M12 0v18M0 6h18M0 12h18" stroke="#ddd"/><path d="M16 1H1v10q0 6 6 6h5" class="sb"/></symbol>
        <symbol id="f10" viewBox="0 0 18 18"><path d="M2 2v14" stroke="#222" stroke-width="2"/><path d="M2 2h14" class="sb"/><path d="M.5 .5h3v3h-3zM14.500 .5h3v3h-3zM.5 14.500h3v3h-3z" class="hd"/></symbol>
        <symbol id="f11" viewBox="0 0 18 18"><path d="M1 16L16 1" class="sb"/><path d="M6.500 6.500h3v3h-3z" class="hd"/></symbol>
        <symbol id="f12" viewBox="0 0 18 18"><path d="M9 0v4M9 14v4M0 9h4M14 9h4" class="sb"/><circle cx="9" cy="9" r="5.500" class="sd"/><circle cx="9" cy="9" r="2" fill="#2c7da3"/></symbol>
        <symbol id="f13" viewBox="0 0 18 18"><path d="M1.500 1.500h5v15h-5zM6.500 4.500h10v9h-10" fill="#eee" stroke="#333"/><path d="M0 9h18" stroke="#2c7da3" stroke-dasharray="3 1"/></symbol>
        <symbol id="f14" viewBox="0 0 18 18"><path d="M6 14l8-8" class="sb"/><path d="M1 8l6 6M8 1l6 5M2 8l6-5" stroke="#222" stroke-width="2"/><path d="M1 9V4l5 5zM6 1h5v5z" fill="#222"/></symbol>
        <symbol id="f15" viewBox="0 0 18 18"><path d="M1 9h8L5 16zM5 16l7-14h6" class="sd"/></symbol>
        <symbol id="f16" viewBox="0 0 20 18"><path d="M.5 1.500h19v9H.5zM9 1v10" fill="#fff" stroke="#333"/><text x="11" y="9" font-size="7" font-weight="bold">0.3</text><path d="M3 8h4q0-4-2-4t-2 4z" class="sk"/></symbol>
        <symbol id="f17" viewBox="0 0 18 18"><path d="M1 16l5-5" stroke="#222" stroke-width="2"/><circle cx="10" cy="7" r="6" fill="#fff" stroke="#444"/><text x="7" y="10" font-size="9">N</text></symbol>
        <symbol id="f18" viewBox="0 0 18 18"><path d="M1.500 1.500h13v12h-13z" fill="#fff" stroke="#333"/><text x="4" y="12" font-size="12" font-family="Liberation Serif" font-weight="bold">A</text><path d="M5 17h7l-3-4z" fill="#222"/></symbol>
        <symbol id="f19" viewBox="0 0 18 18"><path d="M0 12l4-8h13M5 11l4-7v7l4-7M13 4l4 4" class="sd"/></symbol>
        <symbol id="f20" viewBox="0 0 18 18"><path d="M1 0v8h8z" fill="#4e9cc2" stroke="#222"/><path d="M1 11q2 3 0 6M4 11q2 3 0 6M7 11q2 3 0 6M10 11q2 3 0 6" class="sk"/></symbol>
        <symbol id="f21" viewBox="0 0 18 18"><path d="M1 16l5-5" stroke="#222" stroke-width="2"/><circle cx="9" cy="7" r="6" fill="#fff" stroke="#444"/><path d="M3 7h12" stroke="#444"/><text x="6" y="13" font-size="7">A1</text></symbol>
        <symbol id="f22" viewBox="0 0 18 18"><path d="M4 1h8v11H4z" fill="url(#gg)" stroke="#555"/><path d="M1 1v10h14V1M4 13l4 4 4-4z" fill="none" stroke="#333" stroke-dasharray="2 1"/></symbol>
        <symbol id="f23" viewBox="0 0 18 18"><path d="M1.500 1.500h14v14h-14z" fill="#fff" stroke="#333"/><text x="3" y="13" font-size="12" font-family="Liberation Serif" font-weight="bold">A</text><circle cx="13" cy="4" r="1.500" class="sk"/></symbol>
        <symbol id="f24" viewBox="0 0 18 18"><circle cx="9" cy="8" r="7.500" fill="#fff" stroke="#333"/><path d="M9 8V.5A7.500 7.500 0 0 1 16.500 8zM9 8v7.500A7.500 7.500 0 0 1 1.500 8z" fill="#222"/></symbol>
        <symbol id="f25" viewBox="0 0 18 18"><path d="M0 5h10" stroke="#222" stroke-width="2"/><path d="M10.500 1.500h7v7h-7z" fill="#4e9cc2" stroke="#184b66"/></symbol>
        <symbol id="f26" viewBox="0 0 18 18"><path d="M0 5h18" stroke="#222" stroke-width="2"/><path d="M5.500 1.500h7v7h-7z" fill="#4e9cc2" stroke="#184b66"/></symbol>
        <symbol id="tag" viewBox="0 0 18 18"><path d="M1 5l9-4 7 8-7 8z" fill="#ddd" stroke="#444"/><circle cx="7" cy="6" r="2" class="sk"/><path d="M10 17V10l7-1" class="sk"/></symbol>
    </svg>

    <header class="titlebar">
        <div class="logo">
            <svg class="logo-mark" viewBox="0 0 28 28"><path d="M9 3q9-4 9 0 0 4-7 7M4 13q13-4 12 3-2 7-15 9 5-4 8-11M27 11h-5q-6 0-4 4l5 4q2 6-3 6h-4" fill="none" stroke="#d9251d" stroke-width="2.600"/></svg>
            <span class="logo-text"><b>SOLID</b>WORKS</span>
        </div>
        <nav class="menubar">
            <a href="#">File</a><a href="#">Edit</a><a href="#">View</a><a href="#">Insert</a><a href="#">Tools</a><a href="#">Window</a><a href="#">Help</a>
        </nav>
        <button class="pin" aria-label="Pin menu"><svg class="i"><use href="#pin"/></svg></button>
        <div class="quickbar">
            <button class="quick" aria-label="New"><svg class="i"><use href="#new"/></svg><span class="caret"></span></button>
            <button class="quick" aria-label="Open"><svg class="i"><use href="#open"/></svg><span class="caret"></span></button>
            <button class="quick" aria-label="Save"><svg class="i"><use href="#save"/></svg><span class="caret"></span></button>
            <button class="quick" aria-label="Print"><svg class="i"><use href="#print"/></svg><span class="caret"></span></button>
            <button class="quick" aria-label="Undo"><svg class="i"><use href="#undo"/></svg><span class="caret"></span></button>
            <button class="pick" aria-label="Select"><span class="pick-on"><svg class="i"><use href="#arrow"/></svg></span><span class="caret"></span></button>
            <button class="tool" aria-label="Rebuild"><svg class="i"><use href="#light"/></svg></button>
            <button class="tool" aria-label="File Properties"><svg class="i"><use href="#opts"/></svg></button>
            <button class="quick" aria-label="Options"><svg class="i"><use href="#gear"/></svg><span class="caret"></span></button>
        </div>
        <div class="doc-title">Sketch1 of Part1.SLDPRT *</div>
        <div class="search">
            <svg class="i"><use href="#chat"/></svg>
            <input type="text" placeholder="Search Community Forum" aria-label="Search Community Forum">
            <button aria-label="Search"><svg class="i"><use href="#find"/></svg></button>
            <span class="caret"></span>
        </div>
        <div class="window-buttons">
            <button class="ask" aria-label="Help">?</button>
            <button aria-label="Help menu"><span class="caret"></span></button>
            <button class="wide" aria-label="Minimize"><svg class="i"><use href="#min"/></svg></button>
            <button class="wide" aria-label="Restore"><svg class="i"><use href="#restore"/></svg></button>
            <button class="wide" aria-label="Close"><svg class="i"><use href="#close"/></svg></button>
        </div>
    </header>

    <div class="commands">
        <div class="ribbon">
            <div class="group first">
                <button class="big exit"><span class="exit-on"><svg class="i"><use href="#exit"/></svg><span>Exit<br>Sketch</span></span><span class="caret"></span></button>
                <button class="big w66"><svg class="i"><use href="#dim"/></svg><span>Smart<br>Dimension</span><span class="caret"></span></button>
            </div>
            <div class="group entities">
                <button aria-label="Line"><svg class="i20"><use href="#line"/></svg></button><span class="caret"></span>
                <button aria-label="Circle"><svg class="i20"><use href="#circle"/></svg></button><span class="caret"></span>
                <button aria-label="Spline"><svg class="i20"><use href="#spline"/></svg></button><span class="caret"></span>
                <button aria-label="Plane"><svg class="i20"><use href="#plane"/></svg></button>
                <button aria-label="Rectangle"><svg class="i20"><use href="#rect"/></svg></button><span class="caret"></span>
                <button aria-label="Arc"><svg class="i20"><use href="#arc"/></svg></button><span class="caret"></span>
                <button aria-label="Ellipse"><svg class="i20"><use href="#ellipse"/></svg></button><span class="caret"></span>
                <button aria-label="Text"><svg class="i20"><use href="#stext"/></svg></button>
                <button aria-label="Slot"><svg class="i20"><use href="#slot"/></svg></button><span class="caret"></span>
                <button aria-label="Polygon"><svg class="i20"><use href="#poly"/></svg></button><span></span>
                <button aria-label="Fillet"><svg class="i20"><use href="#fillet"/></svg></button><span class="caret"></span>
                <button aria-label="Point"><svg class="i20"><use href="#point"/></svg></button>
            </div>
            <div class="group">
                <button class="big w50"><svg class="i"><use href="#trim"/></svg><span><u>T</u>rim<br>Entities</span><span class="caret"></span></button>
                <button class="big w50"><svg class="i"><use href="#convert"/></svg><span>Convert<br>Entities</span><span class="caret"></span></button>
                <button class="big low w50"><svg class="i"><use href="#offset"/></svg><span>Offset<br>Entities</span></button>
                <button class="big low w44" disabled><svg class="i"><use href="#offsurf"/></svg><span>Offset<br>On<br>Surface</span></button>
                <div class="stack">
                    <button><svg class="i"><use href="#mirror"/></svg>Mirror Entities</button>
                    <button><svg class="i"><use href="#pattern"/></svg>Linear Sketch Pattern<span class="caret"></span></button>
                    <button><svg class="i"><use href="#move"/></svg>Move Entities<span class="caret"></span></button>
                </div>
            </div>
            <div class="group">
                <button class="big w86"><svg class="i"><use href="#rel"/></svg><span>Display/Delete<br>Relations</span><span class="caret"></span></button>
                <button class="big low w44"><svg class="i"><use href="#repair"/></svg><span>Repair<br>Sketch</span></button>
            </div>
            <div class="group">
                <button class="big w44"><svg class="i"><use href="#snaps"/></svg><span>Quick<br>Snaps</span><span class="caret"></span></button>
            </div>
            <div class="group">
                <button class="big low w44"><svg class="i"><use href="#rapid"/></svg><span>Rapid<br>Sketch</span></button>
                <button class="big low w58"><svg class="i"><use href="#instant"/></svg><span>Instant2D</span></button>
                <button class="big low w58"><svg class="i"><use href="#shaded"/></svg><span>Shaded<br>Sketch<br>Contours</span></button>
            </div>
        </div>
        <div class="dock">
            <div class="capture">
                <span class="grip"></span>
                <button aria-label="Capture image"><svg class="i"><use href="#camera"/></svg></button>
                <button aria-label="Record video"><svg class="i"><use href="#record"/></svg></button>
                <button aria-label="Stop recording" disabled><svg class="i"><use href="#stoprec"/></svg></button>
            </div>
        </div>
    </div>

    <main class="workspace">
        <!-- sketch geometry -->
        <svg class="drawing" viewBox="0 118 1920 893">
            <g fill="none" stroke="#000">
                <path d="M758 793V362h344v431z" stroke-width="2"/>
                <path d="M758 815v66M1102 797v84M758 877h344M702 362h52M706 362v10"/>
            </g>
            <path d="M758 877l14-3v6zM1102 877l-14-3v6z"/>
            <text class="dim-text" x="951" y="874" text-anchor="middle">56</text>
            <g fill="none" stroke="#4a9ff0">
                <path d="M1098 359L832 146 488 577 650 706M830 145l4 4"/>
            </g>
            <text class="dim-text sel" transform="translate(631 393) rotate(-51)">89,64</text>
            <circle cx="824" cy="157" r="3" fill="#357fc0" stroke="#000"/>
            <circle cx="496" cy="566" r="3" fill="#357fc0" stroke="#000"/>
            <path d="M1095 356h7v7h-7z" fill="#3a93cf" stroke="#123"/>
            <g>
                <path d="M276 953v-22h4v22z" fill="#5fae62" stroke="#1c6b20"/>
                <path d="M278 922l4 10h-8z" fill="#176b1b"/>
                <path d="M278 951h22v4h-22z" fill="#ee5a5a" stroke="#a51515"/>
                <path d="M309 953l-10-4v8z" fill="#c31818"/>
                <circle cx="278" cy="953" r="5" fill="#15158c"/>
                <text x="274" y="921" font-size="12" fill="#0a8a0a">Y</text>
                <text x="308" y="957" font-size="12" fill="#e01010">X</text>
            </g>
        </svg>

        <nav class="tabs">
            <a href="#">Features</a><a href="#" class="on">Sketch</a><a href="#">Evaluate</a><a href="#">DimXpert</a><a href="#">SOLIDWORKS Add-Ins</a><a href="#">SOLIDWORKS MBD</a>
        </nav>

        <div class="body">
            <aside class="panel">
                <div class="collapse"><span class="dot"></span></div>
                <nav class="panel-tabs">
                    <button aria-label="FeatureManager"><svg class="i"><use href="#part"/></svg></button>
                    <button class="on" aria-label="PropertyManager"><svg class="i"><use href="#props"/></svg></button>
                    <button aria-label="ConfigurationManager"><svg class="i"><use href="#tree"/></svg></button>
                    <button aria-label="DimXpertManager"><svg class="i"><use href="#cross"/></svg></button>
                    <button aria-label="DisplayManager"><svg class="i"><use href="#ball2"/></svg></button>
                </nav>
                <div class="panel-title"><svg class="i"><use href="#dim"/></svg><b>Dimension</b><button aria-label="Help"><svg class="i"><use href="#help"/></svg></button></div>
                <div class="confirm"><button aria-label="OK"><svg class="i"><use href="#ok"/></svg></button></div>
                <nav class="value-tabs"><a href="#" class="on">Value</a><a href="#">Leaders</a><a href="#">Other</a></nav>

                <section class="section">
                    <h2>Style<svg class="chev"><use href="#up"/></svg></h2>
                    <div class="style-buttons">
                        <button aria-label="Apply defaults"><svg class="i"><use href="#defstyle"/></svg></button>
                        <button aria-label="Add style"><svg class="i"><use href="#star"/><use href="#s-add"/></svg></button>
                        <button aria-label="Delete style"><svg class="i"><use href="#star"/><use href="#s-del"/></svg></button>
                        <button aria-label="Save style"><svg class="i"><use href="#star"/><use href="#s-save"/></svg></button>
                        <button aria-label="Load style"><svg class="i"><use href="#star"/><use href="#s-load"/></svg></button>
                    </div>
                    <div class="field"><div class="select"><select aria-label="Style"><option>&lt;NONE&gt;</option></select></div></div>
                </section>

                <section class="section tolerance">
                    <h2>Tolerance/Precision<svg class="chev"><use href="#up"/></svg></h2>
                    <div class="field"><label for="tol-type"><svg class="i20"><use href="#tol"/></svg></label><div class="select"><select id="tol-type"><option>None</option></select></div></div>
                    <div class="field"><label for="tol-prec"><svg class="i20"><use href="#prec"/></svg></label><div class="select"><select id="tol-prec"><option>.12 (Document)</option></select></div></div>
                </section>

                <section class="section primary">
                    <h2>Primary Value<svg class="chev"><use href="#up"/></svg></h2>
                    <div class="field"><input type="text" value="D3@Sketch1" aria-label="Dimension name"></div>
                    <div class="field"><input type="text" value="89.64373932mm" aria-label="Dimension value" disabled>
                        <div class="spinner"><button aria-label="Increase" disabled><svg><use href="#up"/></svg></button><button aria-label="Decrease" disabled><svg><use href="#down"/></svg></button></div>
                    </div>
                </section>

                <section class="section dimtext">
                    <h2>Dimension Text<svg class="chev"><use href="#up"/></svg></h2>
                    <div class="text-row">
                        <div class="text-buttons spread"><button class="sq" aria-label="Add parentheses"><svg class="i20"><use href="#paren"/></svg></button><button class="sq" aria-label="Inspection"><svg class="i20"><use href="#inspect"/></svg></button></div>
                        <textarea aria-label="Dimension text">&lt;DIM&gt;</textarea>
                    </div>
                    <div class="text-row">
                        <div class="text-buttons"><button class="sq" aria-label="Add parentheses"><svg class="i20"><use href="#paren"/></svg></button><button class="sq" aria-label="Inspection"><svg class="i20"><use href="#inspect"/></svg></button></div>
                        <textarea aria-label="Lower text"></textarea>
                    </div>
                    <div class="symbols">
                        <div><button class="sq" aria-label="Center text"><svg class="i20"><use href="#ctext"/></svg></button><button class="sq" aria-label="Offset text"><svg class="i20"><use href="#otext"/></svg></button></div>
                        <div><button class="sq" aria-label="Align left"><svg class="i20"><use href="#al"/></svg></button><button class="sq on" aria-label="Align center"><svg class="i20"><use href="#ac"/></svg></button><button class="sq" aria-label="Align right"><svg class="i20"><use href="#ar"/></svg></button></div>
                        <div><button class="sq" aria-label="Diameter"><svg class="i20"><use href="#dia"/></svg></button><button class="sq" aria-label="Degree"><svg class="i20"><use href="#deg"/></svg></button><button class="sq" aria-label="Plus minus"><svg class="i20"><use href="#pm"/></svg></button><button class="sq" aria-label="Centerline"><svg class="i20"><use href="#cl"/></svg></button></div>
                        <div><button class="sq" aria-label="Square"><svg class="i20"><use href="#sq"/></svg></button><button class="sq" aria-label="Countersink"><svg class="i20"><use href="#vee"/></svg></button><button class="sq" aria-label="Counterbore"><svg class="i20"><use href="#cbore"/></svg></button><button class="sq" aria-label="Depth"><svg class="i20"><use href="#depth"/></svg></button><button class="sq" aria-label="More symbols"><svg class="i20"><use href="#more"/></svg></button></div>
                    </div>
                </section>

                <section class="section">
                    <h2><input type="checkbox" id="dual"><label for="dual">Dual Dimension</label><svg class="chev"><use href="#down"/></svg></h2>
                </section>
                <div class="handle"><span class="dot"></span></div>
            </aside>

            <div class="viewport">
                <div class="crumb"><span class="expand"></span><svg class="i"><use href="#part"/></svg><span>Part1&nbsp; (Predeterminado&lt;...</span></div>
                <div class="view-name">*Front</div>
            </div>
        </div>

        <div class="hud">
            <button aria-label="Zoom to Fit"><svg class="i"><use href="#zfit"/></svg></button>
            <button aria-label="Zoom to Area"><svg class="i"><use href="#zarea"/></svg></button>
            <button aria-label="Previous View"><svg class="i"><use href="#zprev"/></svg></button>
            <button aria-label="Section View"><svg class="i"><use href="#section"/></svg></button>
            <button aria-label="Dynamic Annotation Views"><svg class="i"><use href="#dynview"/></svg></button>
            <button aria-label="View Orientation"><svg class="i"><use href="#orient"/></svg><span class="caret"></span></button>
            <button aria-label="Display Style"><svg class="i"><use href="#style"/></svg><span class="caret"></span></button>
            <button aria-label="Hide/Show Items"><svg class="i"><use href="#eye"/></svg><span class="caret"></span></button>
            <button aria-label="Edit Appearance"><svg class="i"><use href="#editapp"/></svg></button>
            <button aria-label="Apply Scene"><svg class="i"><use href="#scene"/></svg><span class="caret"></span></button>
            <button aria-label="View Settings"><svg class="i"><use href="#monitor"/></svg><span class="caret"></span></button>
        </div>

        <div class="doc-buttons">
            <button aria-label="Dock left"><svg class="i"><use href="#dockl"/></svg></button>
            <button aria-label="Dock right"><svg class="i"><use href="#dockr"/></svg></button>
            <button aria-label="Minimize document"><svg class="i"><use href="#min"/></svg></button>
            <button aria-label="Restore document"><svg class="i"><use href="#restore"/></svg></button>
            <button aria-label="Close document"><svg class="i"><use href="#close"/></svg></button>
        </div>

        <svg class="corner" viewBox="0 0 70 56">
            <path d="M21 1H2v14q0 10 10 10h10" fill="none" stroke="#cfe2ec" stroke-width="2"/>
            <path d="M22 25l9-9v6q10-1 12-6 1 12-12 14v5z" fill="#dbe9f0" stroke="#c3d2db"/>
            <path d="M48 34l18 18M66 34L48 52" stroke="#e9bcbc" stroke-width="8"/>
            <path d="M48 34l18 18M66 34L48 52" stroke="#f5cfcf" stroke-width="6"/>
        </svg>

        <div class="taskpane">
            <button class="on" aria-label="Resources"><svg class="i"><use href="#home"/></svg></button>
            <button aria-label="Design Library"><svg class="i"><use href="#books"/></svg></button>
            <button aria-label="File Explorer"><svg class="i"><use href="#folder"/></svg></button>
            <button aria-label="View Palette"><svg class="i"><use href="#palette"/></svg></button>
            <button aria-label="Appearances"><svg class="i"><use href="#ball"/></svg></button>
            <button aria-label="Custom Properties"><svg class="i"><use href="#props"/></svg></button>
        </div>

        <div class="mini">
            <button aria-label="Select Other"><svg class="i"><use href="#selother"/></svg></button>
            <button aria-label="Construction Geometry"><svg class="i"><use href="#constr"/></svg></button>
            <button aria-label="Annotation View"><svg class="i"><use href="#anote"/></svg></button>
            <button aria-label="Zoom to Selection"><svg class="i"><use href="#zsel"/></svg></button>
            <button aria-label="Auto Dimension"><svg class="i"><use href="#autodim"/></svg></button>
            <button aria-label="Ordinate Dimension"><svg class="i"><use href="#orddim"/></svg></button>
            <button aria-label="Smart Dimension"><svg class="i"><use href="#dim"/></svg></button>
            <button aria-label="Exit Sketch"><svg class="i"><use href="#exit"/></svg></button>
            <button aria-label="Convert"><svg class="i"><use href="#solid"/></svg></button>
        </div>

        <div class="context">
            <button class="item tall sub">Selection Tools</button>
            <button class="item tall sub">Zoom/Pan/Rotate</button>
            <button class="item icon"><svg class="i20"><use href="#grid"/></svg><span><u>D</u>isplay Grid</span></button>
            <hr>
            <button class="item sub"><span><u>R</u>ecent Commands</span></button>
            <button class="item sub">Sketch Entities</button>
            <button class="item sub"><span><u>M</u>ore Dimensions</span></button>
            <h3>Relations</h3>
            <button class="item icon"><svg class="i20"><use href="#rel"/></svg><span>D<u>i</u>splay/Delete Relations...</span></button>
            <button class="item sub">Sketch Tools</button>
            <button class="item icon"><svg class="i20"><use href="#del"/></svg>Delete</button>
            <h3>Dimension (D3@Sketch1@Part1.SLDPRT)</h3>
            <button class="item checked"><span>Dri<u>v</u>en</span></button>
            <button class="item checked"><span>M<u>a</u>rk For Drawing</span></button>
            <button class="item sub">Display Options</button>
            <button class="item sub"><span><u>A</u>nnotations</span></button>
            <h3>Selected Entity (Dimension)</h3>
            <button class="item"><span>Select Annotation View <u>(</u>*Front)</span></button>
            <button class="expand-menu" aria-label="More"><svg viewBox="0 0 8 10"><path d="M1 1l3 3 3-3M1 5l3 3 3-3" fill="none" stroke="#000" stroke-width="2"/></svg></button>
        </div>
        <div class="marker"></div>
    </main>

    <div class="model-tabs">
        <div class="tab-nav">
            <button aria-label="First"><svg><use href="#first"/></svg></button>
            <button aria-label="Previous"><svg><use href="#prev"/></svg></button>
            <button aria-label="Next"><svg><use href="#next"/></svg></button>
            <button aria-label="Last"><svg><use href="#last"/></svg></button>
        </div>
        <a href="#" class="on">Model</a><a href="#">3D Views</a><a href="#" class="motion">Motion Study 1</a><span class="rest"></span>
    </div>

    <div class="filters">
        <span class="grip"></span>
        <button disabled aria-label="Toggle filters"><svg class="i"><use href="#fun"/></svg></button>
        <button disabled aria-label="Clear filters"><svg class="i"><use href="#funs"/></svg></button>
        <button aria-label="Select all filters"><svg class="i"><use href="#funp"/></svg></button>
        <button class="pick" aria-label="Select"><span class="pick-on"><svg class="i"><use href="#arrow"/></svg></span><span class="caret"></span></button>
        <button aria-label="Magnified selection"><svg class="i"><use href="#arrows"/></svg></button>
        <span class="bar-line"></span>
        <button aria-label="Filter Vertices"><svg class="i"><use href="#f1"/><use href="#flt"/></svg></button>
        <button aria-label="Filter Edges"><svg class="i"><use href="#f2"/><use href="#flt"/></svg></button>
        <button aria-label="Filter Faces"><svg class="i"><use href="#f3"/><use href="#flt"/></svg></button>
        <button aria-label="Filter Surface Bodies"><svg class="i"><use href="#f4"/><use href="#flt"/></svg></button>
        <button aria-label="Filter Solid Bodies"><svg class="i"><use href="#f5"/><use href="#flt"/></svg></button>
        <button aria-label="Filter Axes"><svg class="i"><use href="#f6"/><use href="#flt"/></svg></button>
        <button aria-label="Filter Planes"><svg class="i"><use href="#f7"/><use href="#flt"/></svg></button>
        <button aria-label="Filter Sketch Points"><svg class="i"><use href="#f8"/><use href="#flt"/></svg></button>
        <button aria-label="Filter Sketches"><svg class="i"><use href="#f9"/><use href="#flt"/></svg></button>
        <button aria-label="Filter Sketch Segments"><svg class="i"><use href="#f10"/><use href="#flt"/></svg></button>
        <button aria-label="Filter Midpoints"><svg class="i"><use href="#f11"/><use href="#flt"/></svg></button>
        <button aria-label="Filter Center Marks"><svg class="i"><use href="#f12"/><use href="#flt"/></svg></button>
        <button aria-label="Filter Centerlines"><svg class="i"><use href="#f13"/><use href="#flt"/></svg></button>
        <button aria-label="Filter Dimensions"><svg class="i"><use href="#f14"/><use href="#flt"/></svg></button>
        <button aria-label="Filter Surface Finish"><svg class="i"><use href="#f15"/><use href="#flt"/></svg></button>
        <button aria-label="Filter Geometric Tolerances"><svg class="i"><use href="#f16"/><use href="#flt"/></svg></button>
        <button aria-label="Filter Notes"><svg class="i"><use href="#f17"/><use href="#flt"/></svg></button>
        <button aria-label="Filter Datums"><svg class="i"><use href="#f18"/><use href="#flt"/></svg></button>
        <button aria-label="Filter Weld Symbols"><svg class="i"><use href="#f19"/><use href="#flt"/></svg></button>
        <button aria-label="Filter Weld Beads"><svg class="i"><use href="#f20"/><use href="#flt"/></svg></button>
        <button aria-label="Filter Datum Targets"><svg class="i"><use href="#f21"/><use href="#flt"/></svg></button>
        <button aria-label="Filter Cosmetic Threads"><svg class="i"><use href="#f22"/><use href="#flt"/></svg></button>
        <button aria-label="Filter Blocks"><svg class="i"><use href="#f23"/><use href="#flt"/></svg></button>
        <button aria-label="Filter Dowel Pins"><svg class="i"><use href="#f24"/><use href="#flt"/></svg></button>
        <button aria-label="Filter Connection Points"><svg class="i"><use href="#f25"/><use href="#flt"/></svg></button>
        <button aria-label="Filter Routing Points"><svg class="i"><use href="#f26"/><use href="#flt"/></svg></button>
        <span class="end-line"></span>
    </div>

    <footer class="status">
        <span class="doc">Part1</span>
        <span class="w72">-18.3mm</span>
        <span class="w64">69.43mm</span>
        <span class="w48">0mm</span>
        <span class="defined">Fully Defined</span>
        <span class="editing">Editing Sketch1</span>
        <span class="units">MMGS<span class="caret flip"></span><svg class="i"><use href="#tag"/></svg></span>
    </footer>
    <div class="taskbar"></div>
</body>
</html>
```
FILE: styles.css
```css
* {
    box-sizing: border-box;
}

body {
    margin: 0;
    min-height: 100vh;
    display: flex;
    flex-direction: column;
    background-color: #f7f7f7;
    color: #111;
    font-family: "Open Sans", "Noto Sans", sans-serif;
    font-size: 12px;
    line-height: 13px;
}

button {
    display: flex;
    align-items: center;
    justify-content: center;
    padding: 0;
    border: none;
    background: none;
    color: inherit;
    font: inherit;
}

a {
    color: inherit;
    text-decoration: none;
}

input, select, textarea {
    font: inherit;
    color: inherit;
    border-radius: 0;
}

svg {
    display: block;
    flex: none;
}

/* icons */
.gradients {
    position: absolute;
    width: 0;
    height: 0;
}

.sprite {
    display: none;
}

.i {
    width: 18px;
    height: 18px;
}

.i20 {
    width: 20px;
    height: 20px;
}

.sb {
    fill: none;
    stroke: #2c7da3;
    stroke-width: 2;
}

.sk {
    fill: none;
    stroke: #333;
}

.sd {
    fill: none;
    stroke: #333;
    stroke-width: 2;
}

.hd {
    fill: #fff;
    stroke: #333;
}

.bar {
    stroke: #222;
    stroke-width: 2;
}

.caret {
    width: 6px;
    height: 4px;
    background-color: #444;
    clip-path: polygon(0 0, 100% 0, 50% 100%);
}

.flip {
    clip-path: polygon(0 100%, 100% 100%, 50% 0);
}

.dot {
    width: 6px;
    height: 6px;
    border: 1px solid #8a8a8a;
    border-radius: 50%;
    background-color: #ccc;
}

.grip {
    width: 2px;
    border-left: 2px dotted #999;
}

/* title bar */
.titlebar {
    display: flex;
    align-items: center;
    height: 31px;
    border-bottom: 1px solid #7f7f7f;
}

.logo {
    display: flex;
    align-items: center;
    align-self: flex-start;
    gap: 4px;
    position: relative;
    z-index: 1;
    width: 145px;
    height: 35px;
    margin-left: 10px;
    padding-left: 6px;
    border: 1px solid #8a8a8a;
    border-top: none;
    background: linear-gradient(160deg, #fff 50%, #d4d4d4);
}

.logo-mark {
    width: 28px;
    height: 28px;
    margin-bottom: 6px;
}

.logo-text {
    padding-top: 4px;
    color: #d9251d;
    font: italic 16px Lato, sans-serif;
}

.logo-text b {
    font-weight: 900;
}

.menubar {
    display: flex;
    gap: 14px;
    width: 309px;
    padding-left: 28px;
}

.pin {
    width: 51px;
    height: 30px;
    padding-left: 18px;
    border-right: 2px solid #999;
}

.quickbar {
    display: flex;
    align-items: center;
    padding-left: 12px;
}

.quick {
    width: 39px;
    gap: 7px;
}

.tool {
    width: 26px;
}

.pick {
    width: 40px;
    height: 26px;
    border: 1px solid #8a8a8a;
    background-color: #fff;
    gap: 3px;
    justify-content: flex-start;
}

.pick-on {
    display: flex;
    align-items: center;
    justify-content: center;
    width: 26px;
    height: 24px;
    background-color: #b1b1b1;
    border-right: 1px solid #8a8a8a;
}

.doc-title {
    flex: 1;
    text-align: center;
}

.search {
    display: flex;
    align-items: center;
    gap: 3px;
    width: 202px;
    height: 23px;
    margin-right: 8px;
    padding-left: 4px;
    border: 1px solid #bbb;
}

.search input {
    width: 145px;
    height: 19px;
    padding: 0 1px;
    border: none;
    background-color: #ebecf1;
}

.search input::placeholder {
    color: #666;
}

.window-buttons {
    display: flex;
    color: #333;
}

.window-buttons button {
    width: 18px;
}

.window-buttons .wide {
    width: 26px;
}

.window-buttons .ask {
    font-size: 18px;
    font-weight: bold;
}

/* ribbon */
.commands {
    display: flex;
    height: 87px;
}

.ribbon {
    display: flex;
    flex: 1;
    border-right: 1px solid #7f7f7f;
    border-bottom: 1px solid #7f7f7f;
}

.group {
    display: flex;
    height: 80px;
    margin-top: 6px;
    border-right: 1px solid #c4c4c4;
}

.group.first {
    padding-left: 6px;
}

.group:last-child {
    border-right: none;
}

.big {
    position: relative;
    flex-direction: column;
    justify-content: flex-start;
    gap: 1px;
    padding-top: 6px;
    white-space: nowrap;
}

.big.low {
    padding-top: 13px;
}

.big > .caret {
    position: absolute;
    bottom: 10px;
}

.big:disabled {
    color: #aaa;
}

.exit {
    width: 44px;
    height: 78px;
    padding: 0;
    border: 1px solid #8a8a8a;
    background-color: #fff;
}

.exit > .caret {
    bottom: 7px;
}

.exit-on {
    display: flex;
    flex-direction: column;
    align-items: center;
    gap: 1px;
    width: 42px;
    height: 58px;
    padding-top: 5px;
    background-color: #b1b1b1;
    border-bottom: 1px solid #8a8a8a;
}

.w44 { width: 45px; }
.w50 { width: 50px; }
.w58 { width: 59px; }
.w66 { width: 66px; }
.w86 { width: 86px; }

.entities {
    display: grid;
    grid-template-columns: repeat(7, 20px);
    grid-template-rows: repeat(3, 26px);
    align-items: center;
    justify-items: center;
    padding: 0 4px;
}

.stack {
    display: flex;
    flex-direction: column;
    width: 175px;
    padding: 0 5px 0 2px;
}

.stack button {
    justify-content: flex-start;
    gap: 7px;
    height: 26px;
}

.stack .caret {
    margin-left: auto;
}

.dock {
    width: 383px;
    padding-left: 9px;
}

.capture {
    display: flex;
    align-items: center;
    gap: 9px;
    width: 104px;
    height: 33px;
    padding-left: 7px;
    border: 1px solid #7f7f7f;
    border-top: none;
}

.capture .grip {
    height: 27px;
}

/* workspace */
.workspace {
    position: relative;
    flex: 1;
    display: flex;
    flex-direction: column;
    background-color: #fff;
}

.drawing {
    position: absolute;
    width: 100%;
    height: 100%;
}

.dim-text {
    font: bold 18px Lato, sans-serif;
}

.dim-text.sel {
    fill: #4a9ff0;
}

.tabs {
    display: flex;
    position: relative;
    height: 22px;
}

.tabs a {
    padding: 4px 6px;
    border: 1px solid #7f7f7f;
    border-width: 0 1px 1px 0;
    background-color: #d4d4d4;
    color: #333;
}

.tabs a.on {
    border-bottom-color: #f7f7f7;
    background-color: #f7f7f7;
    font-weight: 600;
}

.body {
    display: flex;
    flex: 1;
}

.panel {
    position: relative;
    width: 238px;
    border-right: 1px solid #7f7f7f;
    background-color: #f7f7f7;
}

.collapse {
    display: flex;
    align-items: center;
    justify-content: center;
    height: 16px;
    margin: 2px 2px 4px 0;
    border: 1px solid #bbb;
    border-width: 1px 0;
}

.panel-tabs, .value-tabs {
    display: flex;
    margin-right: 2px;
    border-bottom: 1px solid #aaa;
}

.panel-tabs button {
    width: 40px;
    height: 26px;
    margin-bottom: -1px;
    border: 1px solid #7f7f7f;
    border-left: none;
    background-color: #d4d4d4;
}

.panel-tabs .on, .value-tabs .on {
    border-bottom-color: #f7f7f7;
    background-color: #f7f7f7;
}

.panel-title {
    display: flex;
    align-items: center;
    gap: 6px;
    height: 32px;
    padding: 0 10px 0 8px;
}

.panel-title b {
    font-weight: 600;
}

.panel-title button {
    margin-left: auto;
}

.confirm {
    height: 34px;
    padding: 2px 4px;
}

.value-tabs a {
    height: 25px;
    margin-bottom: -1px;
    padding: 5px 4px;
    border: 1px solid #7f7f7f;
    border-left: none;
    background-color: #d4d4d4;
    color: #555;
}

.value-tabs {
    margin-bottom: 16px;
}

.section {
    margin: 0 5px 0 3px;
    padding-bottom: 10px;
    border-top: 1px solid #aaa;
}

.section.tolerance {
    padding-bottom: 11px;
}

.section h2 {
    display: flex;
    align-items: center;
    height: 27px;
    margin: 0;
    padding: 0 2px 0 4px;
    color: #444;
    font-size: 11px;
    font-weight: 600;
}

.section h2 input {
    appearance: none;
    width: 12px;
    height: 12px;
    margin: 0 11px 0 0;
    border: 1px solid #222;
    background-color: #fff;
}

.chev {
    width: 12px;
    height: 12px;
    margin-left: auto;
}

.style-buttons {
    display: flex;
    margin: 0 0 5px 34px;
}

.style-buttons button, .sq {
    width: 24px;
    height: 24px;
    border: 1px solid #8a8a8a;
    background-color: #fff;
}

.field {
    display: flex;
    align-items: center;
    padding: 0 5px 0 39px;
}

.field label {
    width: 33px;
    margin-left: -33px;
}

.select {
    position: relative;
    flex: 1;
}

.select::after {
    content: "";
    position: absolute;
    top: 5px;
    right: 6px;
    width: 6px;
    height: 6px;
    border: 1px solid #444;
    border-width: 0 1px 1px 0;
    transform: rotate(45deg);
}

.select select {
    display: block;
    appearance: none;
    width: 100%;
    height: 21px;
    padding: 0 4px;
    border: 1px solid #aaa;
    background-color: #e1e1e1;
}

.tolerance .field {
    padding-top: 2px;
}

.tolerance .field + .field {
    padding-top: 11px;
}

.primary input {
    flex: 1;
    width: 100%;
    height: 20px;
    padding: 0 5px;
    border: 1px solid #666;
}

.primary .field + .field {
    padding-top: 8px;
}

.primary input:disabled {
    height: 23px;
    border: 1px solid #c4c4c4;
    outline: 1px solid #fff;
    outline-offset: -2px;
    background-color: #d6dae0;
    color: #777;
}

.spinner {
    display: flex;
    flex-direction: column;
    gap: 1px;
    width: 19px;
    margin-left: 2px;
}

.spinner button {
    height: 11px;
    background-color: #eee;
}

.spinner svg {
    width: 8px;
    height: 8px;
    opacity: 0.5;
}

.text-row {
    display: flex;
    gap: 3px;
    margin-bottom: 7px;
    padding: 0 2px 0 4px;
}

.text-buttons.spread {
    display: flex;
    flex-direction: column;
    justify-content: space-between;
}

.text-row textarea {
    flex: 1;
    width: 100%;
    height: 52px;
    padding: 0 1px;
    border: 1px solid #aaacb5;
    background-color: #fff;
    resize: none;
}

.symbols {
    display: flex;
    flex-direction: column;
    gap: 2px;
    padding: 1px 0 1px 4px;
}

.symbols div {
    display: flex;
    gap: 2px;
}

.sq.on {
    border-color: #555;
    background-color: #b1b1b1;
}

.handle {
    position: absolute;
    top: 405px;
    right: -10px;
    display: flex;
    align-items: center;
    justify-content: center;
    width: 10px;
    height: 39px;
    border: 1px solid #7f7f7f;
    border-left: none;
    background-color: #f7f7f7;
}

.viewport {
    position: relative;
    flex: 1;
    display: flex;
    flex-direction: column;
    justify-content: space-between;
    padding: 6px 10px 3px 6px;
}

.crumb {
    display: flex;
    align-items: center;
    font-size: 11px;
}

.crumb .i {
    margin: 0 3px 0 13px;
}

.expand {
    width: 5px;
    height: 8px;
    background-color: #222;
    clip-path: polygon(0 0, 100% 50%, 0 100%);
}

.view-name {
    padding-left: 4px;
    font-weight: bold;
}

.hud {
    position: absolute;
    top: 6px;
    left: 228px;
    right: 0;
    display: flex;
    justify-content: center;
    gap: 8px;
}

.hud button {
    gap: 8px;
}

.hud .caret {
    background-color: #999;
}

.doc-buttons {
    position: absolute;
    top: 6px;
    right: 12px;
    display: flex;
    gap: 8px;
    color: #999;
}

.corner {
    position: absolute;
    top: 34px;
    right: 33px;
    width: 70px;
    height: 56px;
}

.taskpane {
    position: absolute;
    top: 50px;
    right: 0;
    width: 27px;
    border: 1px solid #7f7f7f;
    border-right: none;
}

.taskpane button {
    width: 26px;
    height: 24px;
    border-bottom: 1px solid #7f7f7f;
    background-color: #d4d4d4;
}

.taskpane button:last-child {
    border-bottom: none;
}

.taskpane .on {
    background-color: #f7f7f7;
}

/* context toolbar and menu */
.mini, .context {
    position: absolute;
    left: 645px;
    width: 283px;
    border: 1px solid #8a8a8a;
    background-color: #f7f7f7;
    box-shadow: 2px 2px 2px #888;
}

.mini {
    top: 200px;
    display: flex;
    gap: 12px;
    height: 38px;
    padding-left: 9px;
}

.context {
    top: 248px;
    padding-top: 1px;
}

.context hr {
    height: 1px;
    margin: 0 0 0 31px;
    border: none;
    background-color: #c4c4c4;
}

.context h3 {
    height: 24px;
    margin: 0;
    padding: 4px 3px;
    border: 1px solid #c4c4c4;
    border-width: 1px 0;
    font-size: 12px;
    font-weight: 600;
    white-space: nowrap;
}

.context .icon + h3 {
    margin-top: 2px;
}

.item {
    position: relative;
    justify-content: flex-start;
    width: 100%;
    height: 24px;
    padding-left: 37px;
    white-space: nowrap;
}

.item.tall {
    height: 26px;
}

.item.icon {
    padding-left: 7px;
    gap: 10px;
}

.item.sub::after {
    content: "";
    position: absolute;
    right: 13px;
    width: 5px;
    height: 8px;
    background-color: #555;
    clip-path: polygon(0 0, 100% 50%, 0 100%);
}

.item.checked::before {
    content: "✔";
    position: absolute;
    left: 4px;
    width: 24px;
    height: 24px;
    border: 1px solid #777;
    border-width: 0 1px 0 1px;
    background-color: #c8c8ca;
    font: 9px/24px "DejaVu Sans", sans-serif;
    text-align: center;
}

.expand-menu {
    width: 100%;
    height: 31px;
    padding-top: 6px;
}

.expand-menu svg {
    width: 6px;
    height: 8px;
}

.marker {
    position: absolute;
    top: 543px;
    left: 592px;
    width: 230px;
    height: 30px;
    border: 5px solid #ed1c24;
}

/* bottom bars */
.model-tabs {
    display: flex;
    height: 15px;
    padding-left: 27px;
    border-left: 2px solid #9fb8c0;
}

.tab-nav {
    display: flex;
    width: 64px;
    margin-left: -2px;
    border-top: 1px solid #222;
}

.tab-nav button {
    width: 16px;
    border: 1px solid #999;
    background-color: #b4b4b4;
}

.tab-nav svg {
    width: 14px;
    height: 12px;
}

.model-tabs a {
    padding: 0 9px;
    border: 1px solid #7f7f7f;
    border-width: 1px 1px 0 0;
    background-color: #d4d4d4;
}

.model-tabs a.on {
    width: 57px;
    padding: 0 0 0 13px;
    border-top-color: #f7f7f7;
    background-color: #f7f7f7;
    font-weight: 600;
}

.model-tabs .motion {
    padding-right: 14px;
}

.rest {
    flex: 1;
    border-top: 1px solid #7f7f7f;
}

.filters {
    display: flex;
    align-items: center;
    gap: 9px;
    height: 34px;
    padding: 2px 0 0 4px;
    border-bottom: 1px solid #7f7f7f;
}

.filters .grip {
    height: 26px;
    margin-right: 3px;
}

.filters .pick {
    width: 42px;
    margin: 0 -4px;
}

.bar-line {
    width: 1px;
    height: 22px;
    margin-left: -1px;
    background-color: #8a8a8a;
}

.end-line {
    width: 1px;
    height: 31px;
    background-color: #7f7f7f;
}

.status {
    display: flex;
    align-items: center;
    height: 18px;
    white-space: nowrap;
}

.doc {
    flex: 1;
    padding-left: 1px;
}

.w72 { width: 72px; }
.w64 { width: 64px; }
.w48 { width: 48px; }

.defined {
    width: 76px;
    margin-right: 7px;
    border-right: 1px solid #ccc;
}

.editing {
    width: 92px;
    margin-right: 15px;
    padding-left: 3px;
    border: 1px solid #ccc;
    border-width: 0 1px;
}

.units {
    display: flex;
    align-items: center;
    width: 178px;
    padding: 0 3px 0 31px;
    border-left: 1px solid #ccc;
}

.units .caret {
    margin-left: 16px;
}

.units .i {
    margin-left: auto;
}

.taskbar {
    height: 2px;
    background-color: #333;
}
```
